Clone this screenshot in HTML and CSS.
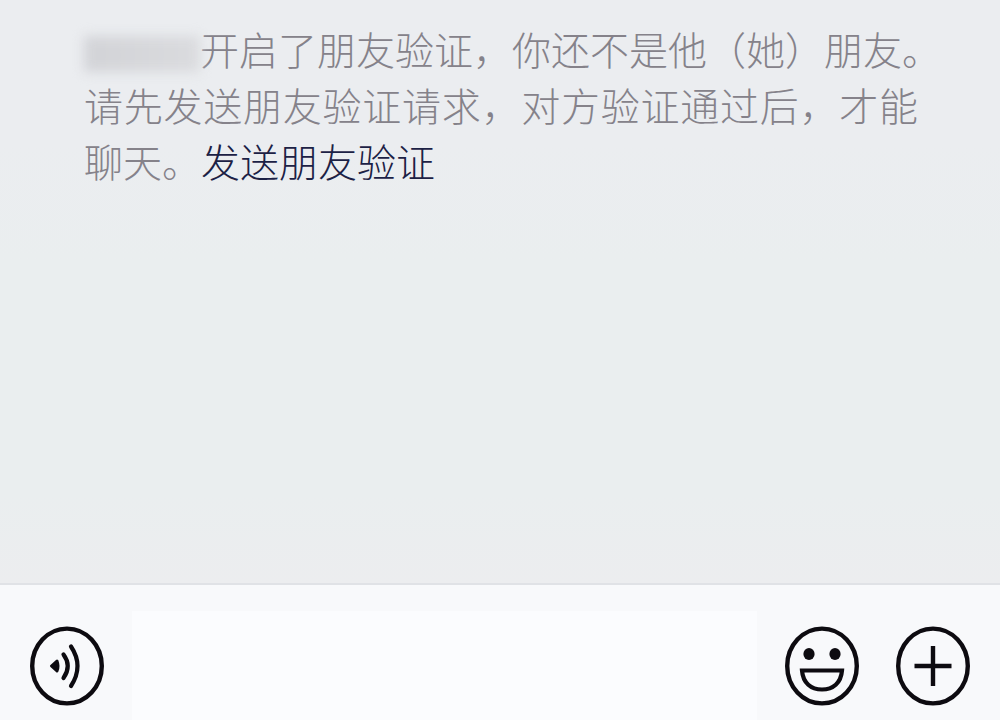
FILE: index.html
```
<!DOCTYPE html>
<html lang="zh-CN">
<head>
  <meta charset="UTF-8" />
  <meta name="viewport" content="width=device-width, initial-scale=1.0"/>
  <title>聊天</title>
  <link rel="stylesheet" href="styles.css">
</head>
<body>
  <div class="chat">
    <!-- Messages -->
    <main class="messages">
      <p class="notice">
        <span class="line"><span class="hidden-name"></span>开启了朋友验证，你还不是他（她）朋友。</span>
        <span class="line justified">请先发送朋友验证请求，对方验证通过后，才能</span>
        <span class="line">聊天。<a class="verify-link" href="#">发送朋友验证</a></span>
      </p>
    </main>

    <!-- Input bar -->
    <form class="input-bar">
      <button class="icon-btn" type="button" aria-label="语音">
        <svg viewBox="0 0 74 80" width="74" height="80">
          <ellipse cx="37" cy="40" rx="34.8" ry="37.4" fill="none" stroke="#0d0b10" stroke-width="4.4"/>
          <path d="M21.500 40 L27 35 Q29 40 27 45 Z" fill="#0d0b10" stroke="#0d0b10" stroke-width="3" stroke-linejoin="round"/>
          <path d="M33.500 28.500 Q42 40 33.500 52" fill="none" stroke="#0d0b10" stroke-width="4.200" stroke-linecap="round"/>
          <path d="M41 20.500 Q54 40 41 60" fill="none" stroke="#0d0b10" stroke-width="4.200" stroke-linecap="round"/>
        </svg>
      </button>
      <input class="message-input" type="text" aria-label="输入消息">
      <div class="actions">
        <button class="icon-btn" type="button" aria-label="表情">
          <svg viewBox="0 0 74 80" width="74" height="80">
            <ellipse cx="37" cy="40" rx="34.8" ry="37.4" fill="none" stroke="#0d0b10" stroke-width="4.4"/>
            <ellipse cx="24" cy="28" rx="5.600" ry="6" fill="#0d0b10"/>
            <ellipse cx="50" cy="28" rx="5.600" ry="6" fill="#0d0b10"/>
            <path d="M17 44.500 H57 C56 57 48 63.500 37 63.500 C26 63.500 18 57 17 44.500 Z" fill="none" stroke="#0d0b10" stroke-width="4.200"/>
          </svg>
        </button>
        <button class="icon-btn" type="button" aria-label="更多">
          <svg viewBox="0 0 74 80" width="74" height="80">
            <ellipse cx="37" cy="40" rx="34.8" ry="37.4" fill="none" stroke="#0d0b10" stroke-width="4.4"/>
            <path d="M18.500 40 H55.500 M37 20 V60" fill="none" stroke="#0d0b10" stroke-width="4.400"/>
          </svg>
        </button>
      </div>
    </form>
  </div>
</body>
</html>
```
FILE: styles.css
```
body {
  margin: 0;
  font-family: "Noto Sans CJK SC", sans-serif;
}

.chat {
  display: flex;
  flex-direction: column;
  min-height: 100vh;
}

/* Messages */
.messages {
  flex: 1;
  padding: 20px 82px 20px 84px;
  background: linear-gradient(#ebedf0 25%, #eaeeef 45%, #eaeeef 85%, #ecedef);
}

.notice {
  margin: 0;
  font-size: 39px;
  font-weight: 300;
  line-height: 56px;
  color: #85828a;
}

.line {
  display: block;
  white-space: nowrap;
}

.justified {
  white-space: normal;
  text-align-last: justify;
}

/* Blurred nickname */
.hidden-name {
  display: inline-block;
  width: 116px;
  height: 36px;
  vertical-align: middle;
  background: linear-gradient(90deg, #d2d3d7, #dadbde);
  filter: blur(6px);
}

.verify-link {
  color: #1c2145;
  text-decoration: none;
}

/* Input bar */
.input-bar {
  display: flex;
  align-items: center;
  gap: 28px;
  padding: 26px 30px 0;
  height: 109px;
  border-top: 2px solid #e0e2e6;
  background-color: #f8f9fb;
}

.icon-btn {
  display: block;
  flex: none;
  padding: 0;
  border: none;
  background: none;
  cursor: pointer;
}

.icon-btn svg {
  display: block;
}

.message-input {
  flex: 1;
  min-width: 0;
  height: 109px;
  padding: 0 16px;
  box-sizing: border-box;
  border: none;
  outline: none;
  background-color: #fbfcfe;
  font-family: inherit;
  font-size: 39px;
}

.actions {
  display: flex;
  gap: 37px;
}
```
